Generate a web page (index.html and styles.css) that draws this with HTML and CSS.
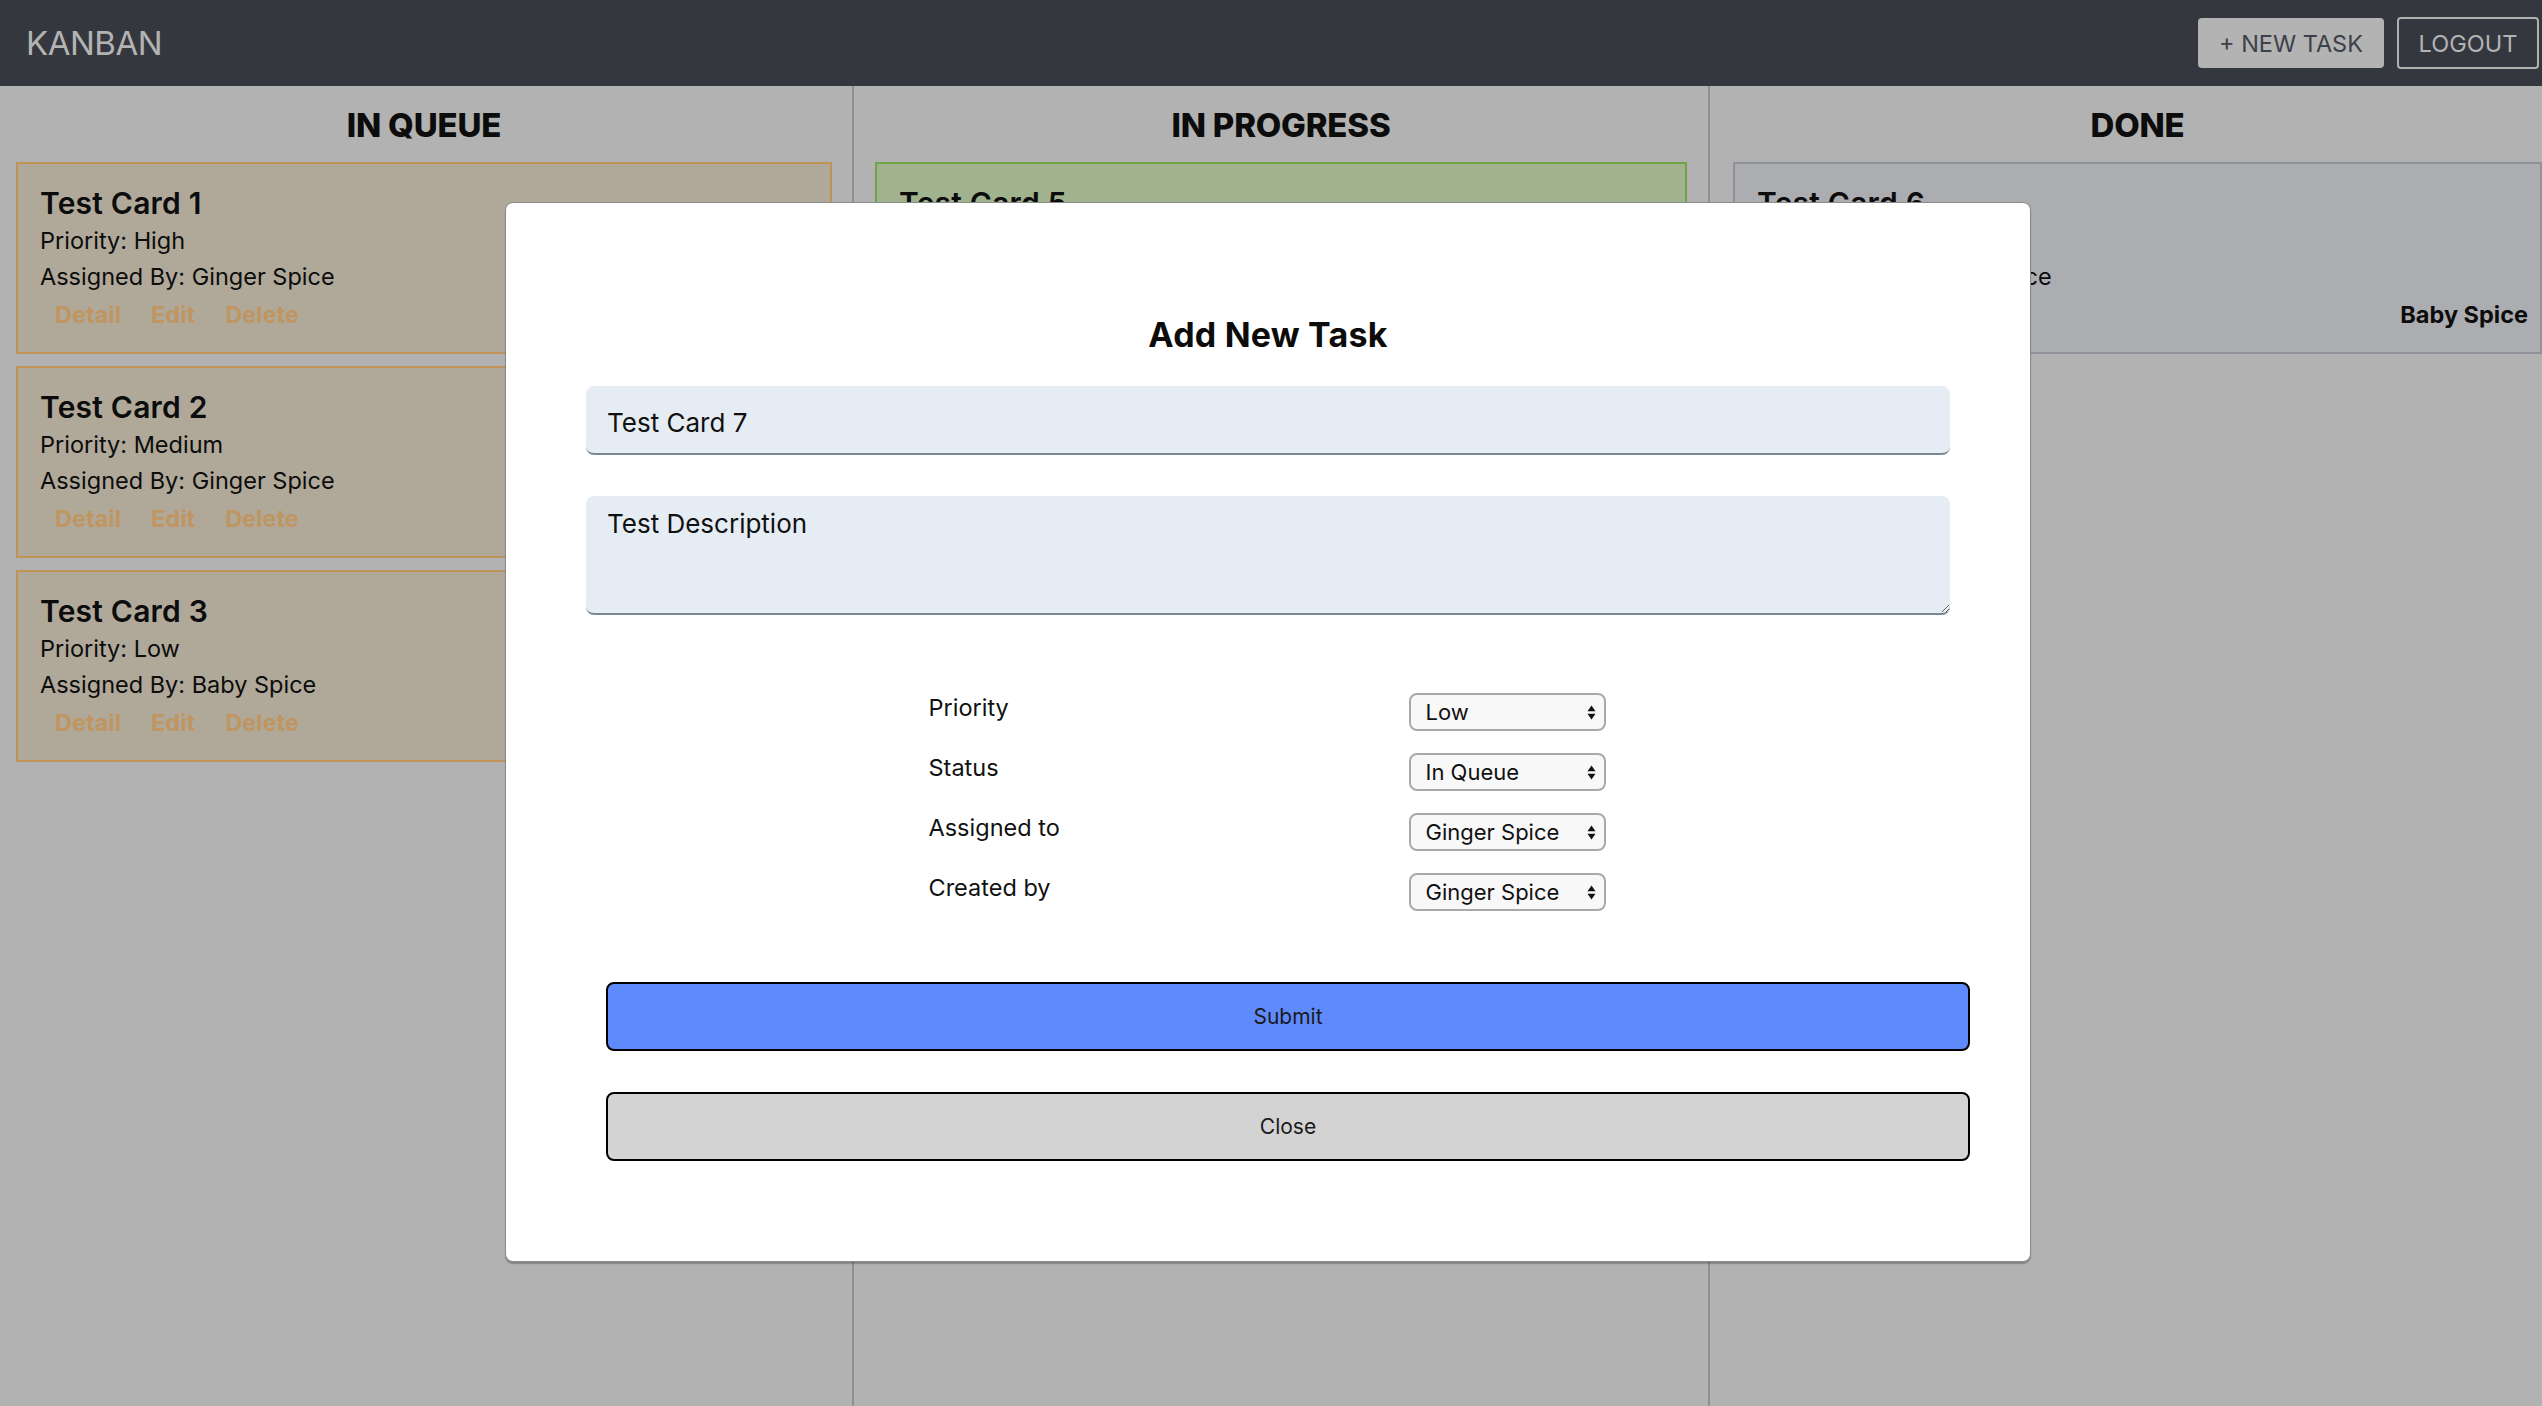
FILE: index.html
```html
<!DOCTYPE html>
<html lang="en">
<head>
<meta charset="utf-8">
<title>Kanban</title>
<link rel="stylesheet" href="styles.css">
</head>
<body>
<header class="topbar">
  <div class="brand">KANBAN</div>
  <nav class="top-actions">
    <button class="btn-new">+ NEW TASK</button>
    <button class="btn-logout">LOGOUT</button>
  </nav>
</header>

<main class="board">
  <section class="column column-first">
    <h2 class="col-title">IN QUEUE</h2>
    <div class="card card-queue">
      <h3 class="card-title">Test Card 1</h3>
      <p class="card-line">Priority: High</p>
      <p class="card-line">Assigned By: Ginger Spice</p>
      <div class="card-links"><a class="link">Detail</a><a class="link">Edit</a><a class="link">Delete</a></div>
    </div>
    <div class="card card-queue">
      <h3 class="card-title">Test Card 2</h3>
      <p class="card-line">Priority: Medium</p>
      <p class="card-line">Assigned By: Ginger Spice</p>
      <div class="card-links"><a class="link">Detail</a><a class="link">Edit</a><a class="link">Delete</a></div>
    </div>
    <div class="card card-queue">
      <h3 class="card-title">Test Card 3</h3>
      <p class="card-line">Priority: Low</p>
      <p class="card-line">Assigned By: Baby Spice</p>
      <div class="card-links"><a class="link">Detail</a><a class="link">Edit</a><a class="link">Delete</a></div>
    </div>
  </section>

  <section class="column column-mid">
    <h2 class="col-title">IN PROGRESS</h2>
    <div class="card card-progress">
      <h3 class="card-title">Test Card 5</h3>
      <p class="card-line">Priority: Medium</p>
      <p class="card-line">Assigned By: Ginger Spice</p>
      <div class="card-links"><a class="link link-green">Detail</a><a class="link link-green">Edit</a><a class="link link-green">Delete</a></div>
    </div>
  </section>

  <section class="column column-last">
    <h2 class="col-title">DONE</h2>
    <div class="card card-done">
      <h3 class="card-title">Test Card 6</h3>
      <p class="card-line">Priority: High</p>
      <p class="card-line">Assigned By: Ginger Spice</p>
      <div class="card-links card-links-done">
        <span><a class="link link-gray">Detail</a><a class="link link-gray">Edit</a><a class="link link-gray">Delete</a></span>
        <span class="done-by">Baby Spice</span>
      </div>
    </div>
  </section>
</main>

<div class="modal">
  <h2 class="modal-title">Add New Task</h2>
  <input class="field" type="text" value="Test Card 7">
  <textarea class="field field-area">Test Description</textarea>

  <div class="form-grid">
    <label class="form-label">Priority</label>
    <span class="select-wrap">
      <select class="select"><option>Low</option></select>
      <svg class="select-arrows" width="9" height="15" viewBox="0 0 9 15"><path d="M0.5 6.2 L4.5 0.5 L8.5 6.2 Z M0.5 8.8 L4.5 14.5 L8.5 8.8 Z" fill="#111"/></svg>
    </span>
    <label class="form-label">Status</label>
    <span class="select-wrap">
      <select class="select"><option>In Queue</option></select>
      <svg class="select-arrows" width="9" height="15" viewBox="0 0 9 15"><path d="M0.5 6.2 L4.5 0.5 L8.5 6.2 Z M0.5 8.8 L4.5 14.5 L8.5 8.8 Z" fill="#111"/></svg>
    </span>
    <label class="form-label">Assigned to</label>
    <span class="select-wrap">
      <select class="select"><option>Ginger Spice</option></select>
      <svg class="select-arrows" width="9" height="15" viewBox="0 0 9 15"><path d="M0.5 6.2 L4.5 0.5 L8.5 6.2 Z M0.5 8.8 L4.5 14.5 L8.5 8.8 Z" fill="#111"/></svg>
    </span>
    <label class="form-label">Created by</label>
    <span class="select-wrap">
      <select class="select"><option>Ginger Spice</option></select>
      <svg class="select-arrows" width="9" height="15" viewBox="0 0 9 15"><path d="M0.5 6.2 L4.5 0.5 L8.5 6.2 Z M0.5 8.8 L4.5 14.5 L8.5 8.8 Z" fill="#111"/></svg>
    </span>
  </div>

  <button class="modal-btn btn-submit">Submit</button>
  <button class="modal-btn btn-close">Close</button>
</div>
</body>
</html>
```

FILE: styles.css
```css
* { box-sizing: border-box; }

html, body {
  margin: 0;
  padding: 0;
  width: 2542px;
  height: 1406px;
  overflow: hidden;
  background: #b2b2b2;
  font-family: Inter, "Liberation Sans", sans-serif;
  color: #0c0c0c;
}

.topbar {
  height: 86px;
  background: #35373f;
  display: flex;
  align-items: center;
  justify-content: space-between;
  padding: 0 3px 0 26px;
}

.brand {
  font-size: 33px;
  font-weight: 400;
  color: #b3b3b3;
  letter-spacing: -0.5px;
}

.top-actions {
  display: flex;
  gap: 13px;
  align-items: center;
}

.btn-new, .btn-logout {
  font-family: Inter, "Liberation Sans", sans-serif;
  font-size: 23.5px;
  height: 50px;
  border-radius: 4px;
  cursor: pointer;
}

.btn-new {
  width: 186px;
  background: #b3b3b3;
  color: #3d4048;
  border: none;
}

.btn-logout {
  width: 142px;
  height: 52px;
  background: transparent;
  color: #b3b3b3;
  border: 2px solid #b0b0b0;
}

.board {
  display: flex;
  height: 1320px;
}

.column {
  flex: 0 0 854px;
  border-right: 2px solid #909090;
  padding: 0 21px;
}

.column-first { padding-left: 16px; padding-right: 20px; }
.column-mid { flex-basis: 856px; }
.column-last { flex-basis: 856px; padding-left: 23px; padding-right: 24px; border-right: none; }

.col-title {
  margin: 19px 0 17px;
  font-size: 33px;
  line-height: 40px;
  font-weight: 800;
  text-align: center;
  letter-spacing: -0.2px;
}

.card {
  border: 2px solid #bd9357;
  background: #b0a999;
  padding: 21px 22px 17px;
  margin-bottom: 12px;
}

.card-progress { background: #a1b38e; border-color: #6fa445; }
.card-done { background: #acadb1; border-color: #8f9399; }

.card-title {
  margin: 0 0 2px;
  font-size: 30px;
  line-height: 36px;
  font-weight: 600;
  letter-spacing: 0.2px;
}

.card-line {
  margin: 0;
  font-size: 23.5px;
  line-height: 36px;
}

.card-links {
  margin-top: 2px;
  line-height: 36px;
}

.card-links-done {
  display: flex;
  justify-content: space-between;
}

.link {
  padding: 0 15px;
  font-size: 23.5px;
  font-weight: 700;
  color: #bf9662;
}

.link-green { color: #5f8f3b; }
.link-gray { color: #7d8088; }

.done-by {
  font-size: 23.5px;
  font-weight: 700;
  margin-right: -10px;
}

/* modal overlay */
.modal {
  position: absolute;
  left: 505px;
  top: 202px;
  width: 1526px;
  height: 1060px;
  background: #fff;
  border: 1px solid #8a8a8a;
  border-radius: 8px;
  box-shadow: 0 2px 1px rgba(0, 0, 0, 0.25);
  padding: 112px 80px 0;
}

.modal-title {
  margin: 0 0 31px;
  font-size: 34px;
  line-height: 40px;
  font-weight: 700;
  text-align: center;
  letter-spacing: 0.2px;
}

.field {
  display: block;
  width: 100%;
  background: #e5ecf4;
  border: none;
  border-bottom: 2px solid #7a8797;
  border-radius: 8px;
  font-family: Inter, "Liberation Sans", sans-serif;
  font-size: 26px;
  color: #111;
  padding: 0 21px;
  outline: none;
}

input.field {
  height: 69px;
  padding-top: 5px;
  margin-bottom: 41px;
}

.field-area {
  height: 119px;
  padding-top: 12px;
  line-height: 31px;
  resize: vertical;
}

.form-grid {
  display: grid;
  grid-template-columns: 482px 197px;
  justify-content: center;
  row-gap: 22px;
  margin-top: 78px;
}

.form-label {
  font-size: 23.5px;
  line-height: 29px;
  color: #111;
}

.select-wrap {
  position: relative;
  display: block;
  height: 38px;
}

.select {
  appearance: none;
  -webkit-appearance: none;
  width: 197px;
  height: 38px;
  margin-left: -2px;
  background: #f8f8f8;
  border: 2px solid #a9a9a9;
  border-radius: 8px;
  font-family: Inter, "Liberation Sans", sans-serif;
  font-size: 22px;
  color: #111;
  padding: 0 0 0 15px;
}

.select-arrows {
  position: absolute;
  right: 12px;
  top: 12px;
  pointer-events: none;
}

.modal-btn {
  display: block;
  width: 100%;
  margin-left: 20px;
  height: 69px;
  border: 2px solid #000;
  border-radius: 8px;
  font-family: Inter, "Liberation Sans", sans-serif;
  font-size: 21px;
  color: #1a1a1a;
  cursor: pointer;
}

.btn-submit {
  background: #5f8afc;
  margin-top: 71px;
}

.btn-close {
  background: #d3d3d3;
  margin-top: 41px;
}
```
